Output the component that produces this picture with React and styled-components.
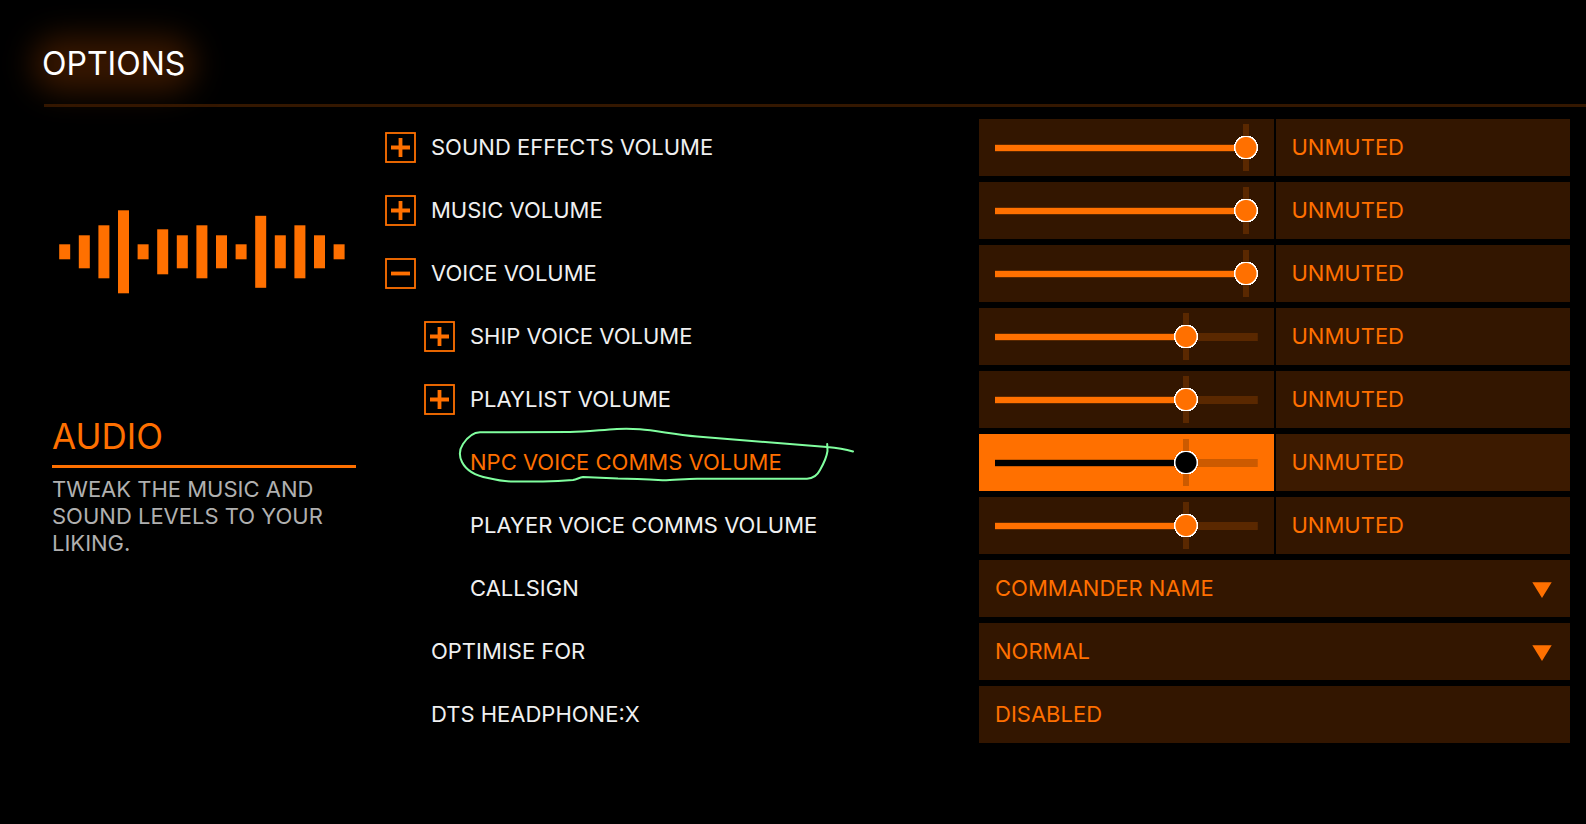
import React, { useState } from "react";
import styled, { createGlobalStyle, css } from "styled-components";

const orange = "#ff7000";
const panel = "#331600";
const dim = "#5a2800";

const GlobalStyle = createGlobalStyle`
  * { box-sizing: border-box; }
  body {
    margin: 0;
    background: #000;
    color: #f0f0f0;
    font-family: Inter, "Liberation Sans", sans-serif;
    font-size: 22px;
    line-height: 27px;
    text-transform: uppercase;
  }
  button, select { font: inherit; text-transform: inherit; }
`;

const Page = styled.div`
  min-height: 100vh;
  overflow-x: hidden;
`;

const Header = styled.header`
  padding: 44px 0 0 42px;
`;

const Title = styled.h1`
  position: relative;
  z-index: 0;
  width: max-content;
  margin: 0 0 20px;
  font-size: 32px;
  font-weight: 400;
  line-height: 40px;
  color: #fff;

  &::before {
    content: "";
    position: absolute;
    z-index: -1;
    inset: -8px -10px;
    border-radius: 28px;
    background: #361600;
    filter: blur(15px);
  }
`;

const Rule = styled.hr`
  height: 3px;
  margin: 0 0 0 2px;
  border: 0;
  background: #341700;
`;

const Body = styled.div`
  display: flex;
  align-items: flex-start;
  gap: 29px;
  padding: 12px 16px 24px 52px;
`;

const Sidebar = styled.aside`
  flex: 0 0 304px;
  padding-top: 91px;
`;

const Wave = styled.svg`
  display: block;
  width: 288px;
  height: 84px;
  margin-left: 6px;
  fill: ${orange};
`;

const SectionTitle = styled.h2`
  margin: 120px 0 0;
  padding-bottom: 7px;
  border-bottom: 3px solid ${orange};
  color: ${orange};
  font-size: 35px;
  font-weight: 400;
  line-height: 44px;
`;

const Description = styled.p`
  margin: 8px 0 0;
  color: #b0b0b0;
`;

const Settings = styled.main`
  flex: 1;
  display: grid;
  gap: 6px;
`;

const Row = styled.div`
  display: grid;
  grid-template-columns: minmax(0, 1fr) minmax(0, 1fr);
  column-gap: 3px;
  height: 57px;
`;

const Name = styled.div`
  position: relative;
  display: flex;
  align-items: center;
  gap: 15px;
  padding-left: ${(p) => (p.$nested ? 39 : 0) + (p.$plain ? 46 : 0)}px;
  color: ${(p) => (p.$active ? orange : "inherit")};
  white-space: nowrap;
`;

const Toggle = styled.button`
  flex: none;
  width: 31px;
  height: 31px;
  padding: 0;
  border: 0;
  background: none;
  cursor: pointer;

  svg { display: block; }
`;

const Scribble = styled.svg`
  position: absolute;
  left: 70px;
  top: -10px;
  width: 405px;
  height: 62px;
  pointer-events: none;
`;

const Pair = styled.div`
  display: grid;
  grid-template-columns: minmax(0, 1fr) minmax(0, 1fr);
  column-gap: 2px;
`;

const SliderCell = styled.div`
  display: flex;
  align-items: center;
  padding: 0 16px;
  background: ${(p) => (p.$active ? orange : panel)};
`;

const track = css`
  height: 47px;
  background:
    linear-gradient(var(--bar), var(--bar)) left center / var(--fill) 6px no-repeat,
    linear-gradient(var(--rest), var(--rest)) center / 100% 8px no-repeat;
`;

const thumb = css`
  width: 24px;
  height: 47px;
  border: 0;
  border-radius: 0;
  background:
    radial-gradient(circle, var(--bar) 10px, #fff 11px, #fff 12px, transparent 12px),
    linear-gradient(var(--rest), var(--rest)) center / 6px 100% no-repeat;
`;

const Slider = styled.input`
  --bar: ${(p) => (p.$active ? "#000" : orange)};
  --rest: ${(p) => (p.$active ? "#cc5a00" : dim)};
  appearance: none;
  width: 100%;
  height: 47px;
  margin: 0;
  background: none;
  cursor: pointer;

  &::-webkit-slider-runnable-track { ${track} }
  &::-moz-range-track { ${track} }
  &::-webkit-slider-thumb { appearance: none; ${thumb} }
  &::-moz-range-thumb { ${thumb} }
`;

const ValueButton = styled.button`
  padding: 0 16px 1px;
  border: 0;
  background: ${(p) => (p.$active ? "#3c1a00" : panel)};
  color: ${orange};
  text-align: left;
  cursor: pointer;
`;

const SelectBox = styled.div`
  display: grid;
  align-items: center;
  background: ${panel};

  > * { grid-area: 1 / 1; }
`;

const Select = styled.select`
  appearance: none;
  width: 100%;
  height: 100%;
  padding: 0 48px 1px 16px;
  border: 0;
  border-radius: 0;
  background: none;
  color: ${orange};
  cursor: pointer;
`;

const Arrow = styled.svg`
  justify-self: end;
  width: 20px;
  height: 16px;
  margin: 2px 18px 0 0;
  fill: ${orange};
  pointer-events: none;
`;

const waveHeights = [15, 33, 53, 83, 15, 45, 33, 53, 33, 15, 72, 33, 53, 33, 15];

const rows = [
  { id: "effects", name: "Sound effects volume", toggle: "plus", value: 100 },
  { id: "music", name: "Music volume", toggle: "plus", value: 100 },
  { id: "voice", name: "Voice volume", toggle: "minus", value: 100 },
  { id: "ship", name: "Ship voice volume", toggle: "plus", nested: true, value: 75 },
  { id: "playlist", name: "Playlist volume", toggle: "plus", nested: true, value: 75 },
  { id: "npc", name: "NPC voice comms volume", nested: true, active: true, value: 75 },
  { id: "player", name: "Player voice comms volume", nested: true, value: 75 },
  { id: "callsign", name: "Callsign", nested: true, option: "Commander name" },
  { id: "optimise", name: "Optimise for", option: "Normal" },
  { id: "dts", name: "DTS Headphone:X", state: "Disabled" },
];

function ToggleIcon({ kind }) {
  return (
    <svg width="31" height="31" viewBox="0 0 31 31" fill="none" stroke={orange} aria-hidden="true">
      <rect x="1" y="1" width="29" height="29" strokeWidth="1.8" />
      <path d={kind === "plus" ? "M6 15.5H25M15.5 6V25" : "M6 15.5H25"} strokeWidth="3.8" />
    </svg>
  );
}

function VolumeControl({ row }) {
  const [value, setValue] = useState(row.value);
  const [muted, setMuted] = useState(false);
  const fill = `calc(12px + (100% - 24px) * ${value / 100})`;
  return (
    <Pair>
      <SliderCell $active={row.active}>
        <Slider
          id={row.id}
          type="range"
          min="0"
          max="100"
          value={value}
          onChange={(e) => setValue(Number(e.target.value))}
          $active={row.active}
          style={{ "--fill": fill }}
        />
      </SliderCell>
      <ValueButton type="button" $active={row.active} aria-pressed={muted} onClick={() => setMuted(!muted)}>
        {muted ? "Muted" : "Unmuted"}
      </ValueButton>
    </Pair>
  );
}

function Control({ row }) {
  if (row.option) {
    return (
      <SelectBox>
        <Select id={row.id}>
          <option>{row.option}</option>
        </Select>
        <Arrow viewBox="0 0 20 16" aria-hidden="true">
          <path d="M0.3 0.3H19.7L10 16Z" />
        </Arrow>
      </SelectBox>
    );
  }
  if (row.state) {
    return <ValueButton id={row.id} type="button">{row.state}</ValueButton>;
  }
  return <VolumeControl row={row} />;
}

export default function App() {
  return (
    <Page>
      <GlobalStyle />
      <Header>
        <Title>Options</Title>
        <Rule />
      </Header>
      <Body>
        <Sidebar>
          <Wave viewBox="0 0 288 84" aria-hidden="true">
            {waveHeights.map((h, i) => (
              <rect key={i} x={1.2 + i * 19.6} y={41.8 - h / 2} width="11" height={h} />
            ))}
          </Wave>
          <SectionTitle>Audio</SectionTitle>
          <Description>Tweak the music and sound levels to your liking.</Description>
        </Sidebar>
        <Settings>
          {rows.map((row) => (
            <Row key={row.id}>
              <Name $nested={row.nested} $plain={!row.toggle} $active={row.active}>
                {row.toggle && (
                  <Toggle type="button" aria-label={row.name} aria-expanded={row.toggle === "minus"}>
                    <ToggleIcon kind={row.toggle} />
                  </Toggle>
                )}
                <label htmlFor={row.id}>{row.name}</label>
                {row.active && (
                  <Scribble viewBox="455 424 405 62" fill="none" stroke="#80ff9f" strokeWidth="2" aria-hidden="true">
                    <path
                      strokeLinecap="round"
                      strokeLinejoin="round"
                      d="M853 451.5C846 449.5 838 448 827 447L697 436.5C672 434 656 430.5 640 429.3C632 428.7 625 428.7 617 429C600 430 586 432 570 432L480 432.3C473 432.5 467 438 463 444C459 450 459.5 457 462 462C467 472 477 476 488 478C497 480.2 505 481.5 513 481.5H543C553 481.3 563 480.8 573 480C577 479.5 579 477.5 583 477L618 478.5C635 478.8 648 479.5 663 480.3C675 480 685 478.9 697 478.7H807C812 478.5 817 476 820 470C824 463 826.5 458 827.5 451L827.2 444"
                    />
                  </Scribble>
                )}
              </Name>
              <Control row={row} />
            </Row>
          ))}
        </Settings>
      </Body>
    </Page>
  );
}
